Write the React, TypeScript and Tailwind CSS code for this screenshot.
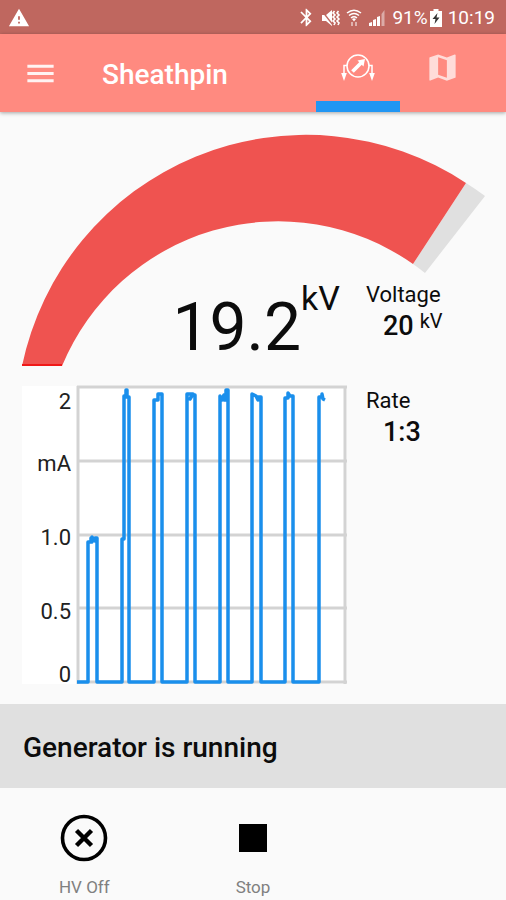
import React from "react";
import { MdBluetooth, MdMap, MdMenu, MdWarning } from "react-icons/md";

const gridLines = [387, 461, 535, 608, 682];
const axisLabels = [
  { text: "2", y: 409 },
  { text: "mA", y: 471 },
  { text: "1.0", y: 545 },
  { text: "0.5", y: 619 },
  { text: "0", y: 682 },
];

const currentTrace =
  "M77 682H88V542H91V538L92 542V537L95 541V538H97V682H122V539H124V396H126V390L127 395V390L127 397H129V682H154V400H158V394H162V682H187V394H193L190 399L192 395H195V682H220V396L222 400L224 395V400H226V395V390H228V682H252V394L256 396L258 400V397H261V682H285V398H288V393L290 396H293V682H319V397H322V394L323 399L325 400";

function MutedVibrateIcon() {
  return (
    <svg width="20" height="18" viewBox="0 0 20 18" aria-hidden="true">
      <path d="M1 6h4l6-5v16l-6-5H1z" fill="#fff" />
      <path d="M1 2l11 14" stroke="#bf675f" strokeWidth="1.3" />
      <path
        d="M13.5 2l-1.5 2 2 2-2 2 2 2-2 2 2 2-1 2M17.5 2L16 4l2 2-2 2 2 2-2 2 2 2-1 2"
        fill="none"
        stroke="#fff"
        strokeWidth="1.6"
      />
    </svg>
  );
}

function WifiIcon() {
  return (
    <svg width="16" height="18" viewBox="0 0 16 18" aria-hidden="true">
      <g fill="none" stroke="#fff" strokeWidth="1.5">
        <path d="M1 4q7-5.500 14 0" />
        <path d="M3 6.500q5-4 10 0" />
        <path d="M5 9q3-2.500 6 0" />
      </g>
      <path d="M6 10q2-1.500 4 0l-2 2.500z" fill="#fff" />
      <path d="M6 13v4M10 13v4" stroke="#fff" strokeOpacity=".5" strokeWidth="2" />
    </svg>
  );
}

function SignalIcon() {
  return (
    <svg width="18" height="18" viewBox="0 0 18 18" aria-hidden="true">
      <path d="M1 17v-3l3-1v4zM5 17v-6l3-1v7zM9 17V8l3-1v10z" fill="#fff" />
      <path d="M13.500 17V5l3-4v16z" fill="#fff" fillOpacity=".45" />
    </svg>
  );
}

function BatteryIcon() {
  return (
    <svg width="12" height="18" viewBox="0 0 12 18" aria-hidden="true">
      <path d="M0 2h3.500V0h5v2H12v16H0z" fill="#fff" />
      <path d="M7.500 4L2.500 10H5.500L4.500 15L9.500 8.500H6.500z" fill="#333" />
    </svg>
  );
}

function GeneratorIcon() {
  return (
    <svg width="36" height="32" viewBox="0 0 36 32" aria-hidden="true">
      <g fill="none" stroke="#fff" strokeWidth="1.500">
        <circle cx="18" cy="14" r="11" />
        <path d="M7.500 13.500H4V23M28.500 13.500H32V23" />
      </g>
      <path d="M1.200 21h5.600L4 29zM29.200 21h5.600L32 29z" fill="#fff" />
      <path d="M12.500 19.500L21 11" stroke="#fff" strokeWidth="3.800" />
      <path d="M25 7L23.500 14.500L17.500 8.500z" fill="#fff" />
    </svg>
  );
}

function StatusBar() {
  return (
    <div className="flex h-[34px] items-center justify-between bg-[#bf675f] pt-px pr-[11px] pl-2 text-white">
      <MdWarning size={22} />
      <div className="flex items-center gap-[6px] text-[19px] leading-6">
        <div className="flex items-center gap-[5px]">
          <div className="flex items-center gap-1">
            <MdBluetooth size={21} stroke="currentColor" />
            <MutedVibrateIcon />
          </div>
          <div className="flex items-center gap-[6px]">
            <WifiIcon />
            <SignalIcon />
          </div>
        </div>
        <div className="flex items-center gap-[2px]">
          <span>91%</span>
          <BatteryIcon />
        </div>
        <span>10:19</span>
      </div>
    </div>
  );
}

function AppBar() {
  return (
    <header className="flex h-[78px] bg-[#ff8a80] pr-[22px] text-white shadow-[0_1px_4px_rgba(0,0,0,0.35)]">
      <button type="button" aria-label="Menu" className="flex w-20 items-center justify-center text-white/90">
        <MdMenu size={35} />
      </button>
      <h1 className="flex flex-1 items-center pt-1 pl-[22px] text-[28px] leading-8 font-medium">Sheathpin</h1>
      <nav className="flex">
        <button
          type="button"
          aria-label="Generator"
          className="flex w-[84px] items-center justify-center border-b-[11px] border-[#2196f3]"
        >
          <GeneratorIcon />
        </button>
        <button
          type="button"
          aria-label="Map"
          className="flex w-[84px] items-center justify-center border-b-[11px] border-transparent text-white/70"
        >
          <MdMap size={35} />
        </button>
      </nav>
    </header>
  );
}

function Gauge() {
  return (
    <section className="grid">
      <svg viewBox="0 112 506 254" className="col-start-1 row-start-1 w-full" role="img" aria-label="Voltage gauge">
        <path d="M466 183A290 290 0 0 1 485 196L425 273A234 234 0 0 0 413 264z" fill="#e0e0e0" />
        <path d="M22 366A290 290 0 0 1 466 183L413 264A234 234 0 0 0 62 366z" fill="#ef5350" />
        <path d="M22 365H62" stroke="#f01818" strokeWidth="2" />
      </svg>
      <div className="col-start-1 row-start-1 flex items-start gap-[26px] self-end pb-[2px]">
        <div className="flex w-[340px] items-start justify-end">
          <span className="pt-3 text-[66px] leading-[72px]">19.2</span>
          <span className="text-[34px] leading-9">kV</span>
        </div>
        <div className="pt-px">
          <div className="text-[22px] leading-7">Voltage</div>
          <div className="flex items-start gap-[6px] pl-[17px]">
            <span className="pt-px text-[27px] leading-8 font-medium">20</span>
            <span className="text-[20px] leading-6">kV</span>
          </div>
        </div>
      </div>
    </section>
  );
}

function CurrentChart() {
  return (
    <svg
      width="325"
      height="298"
      viewBox="22 386 325 298"
      className="shrink-0 overflow-visible bg-white"
      role="img"
      aria-label="Current in mA"
    >
      <g stroke="#d3d3d3" strokeWidth="3">
        {gridLines.map((y) => (
          <path key={y} d={`M77 ${y}H347`} />
        ))}
        <path d="M78 386V684M345 386V684" />
      </g>
      <g fontSize="22" textAnchor="end" fill="#212121">
        {axisLabels.map((label) => (
          <text key={label.text} x="71" y={label.y}>
            {label.text}
          </text>
        ))}
      </g>
      <path d={currentTrace} fill="none" stroke="#1a8fec" strokeWidth="3.500" strokeLinejoin="round" />
    </svg>
  );
}

export default function App() {
  return (
    <div className="flex min-h-screen flex-col bg-[#fafafa] font-[Roboto,sans-serif] text-[#0c0c0c]">
      <StatusBar />
      <AppBar />
      <main>
        <Gauge />
        <section className="flex gap-[19px] pt-5 pb-5 pl-[22px]">
          <CurrentChart />
          <div className="pt-px">
            <div className="text-[22px] leading-7">Rate</div>
            <div className="pt-px pl-[17px] text-[27px] leading-8 font-medium">1:3</div>
          </div>
        </section>
      </main>
      <div role="status" className="flex h-[84px] items-center bg-[#e0e0e0] px-[23px] pt-1 text-[28px] leading-8 font-medium">
        Generator is running
      </div>
      <footer className="grid grid-cols-3 text-[17px] leading-6 text-[#808080]">
        <button type="button" className="flex flex-col items-center gap-3 pt-[25px]">
          <svg width="48" height="50" viewBox="0 0 48 50" fill="none" stroke="#000" aria-hidden="true">
            <circle cx="24" cy="25" r="21.500" strokeWidth="3.600" />
            <path d="M16.500 17.500L31.500 32.500M31.500 17.500L16.500 32.500" strokeWidth="4.400" />
          </svg>
          HV Off
        </button>
        <button type="button" className="flex flex-col items-center gap-3 pt-[25px]">
          <svg width="48" height="50" viewBox="0 0 48 50" aria-hidden="true">
            <path d="M10 11H38V39H10z" fill="#000" />
          </svg>
          Stop
        </button>
      </footer>
    </div>
  );
}
